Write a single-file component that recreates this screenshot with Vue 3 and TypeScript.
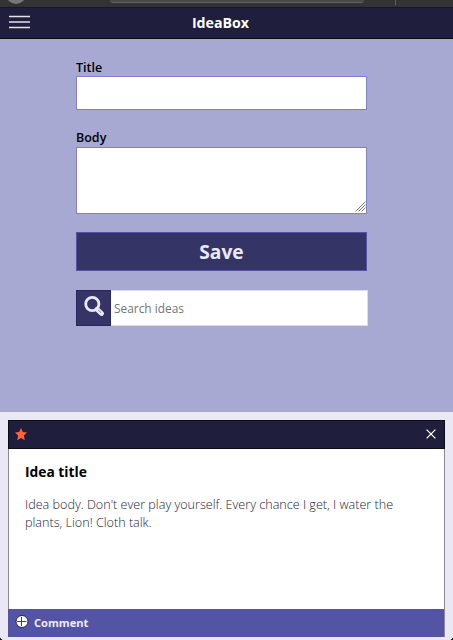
<script setup lang="ts">
import { ref } from 'vue'

interface Idea {
  title: string
  body: string
}

const title = ref('')
const body = ref('')
const query = ref('')
const ideas = ref<Idea[]>([
  {
    title: 'Idea title',
    body: "Idea body. Don't ever play yourself. Every chance I get, I water the plants, Lion! Cloth talk.",
  },
])

function save(): void {
  if (!title.value || !body.value) return
  ideas.value.unshift({ title: title.value, body: body.value })
  title.value = ''
  body.value = ''
}
</script>

<template>
  <div class="page">
    <div class="chrome">
      <span class="knob"></span>
      <span class="address"></span>
      <span class="divider"></span>
    </div>
    <header class="topbar">
      <button class="menu" type="button">
        <svg width="21" height="14" viewBox="0 0 21 14">
          <path d="M0 1.5h21M0 7h21M0 12.5h21" stroke="#e2e2e8" stroke-width="1.3" />
        </svg>
      </button>
      <h1>IdeaBox</h1>
    </header>
    <form class="composer" @submit.prevent="save">
      <label for="title">Title</label>
      <input id="title" v-model="title" class="title-input" type="text" />
      <label for="body" class="body-label">Body</label>
      <div class="area">
        <textarea id="body" v-model="body"></textarea>
        <svg class="grip" width="11" height="11" viewBox="0 0 11 11">
          <path d="M0.5 10.5L10.5 0.5M3.5 10.5L10.5 3.5M6.5 10.5L10.5 6.5" stroke="#777" stroke-width="1" />
        </svg>
      </div>
      <button class="save" type="submit">Save</button>
      <div class="search">
        <span class="search-icon">
          <svg width="20" height="21" viewBox="0 0 20 21">
            <path d="M13 13.2l4.5 4.3" stroke="#e9e8f5" stroke-width="4.8" stroke-linecap="round" />
            <circle cx="8.3" cy="8" r="6.6" fill="none" stroke="#e9e8f5" stroke-width="2.8" />
            <path d="M14.2 14l2.8 2.7" stroke="#777695" stroke-width="0.9" />
          </svg>
        </span>
        <input v-model="query" type="text" placeholder="Search ideas" />
      </div>
    </form>
    <main class="ideas">
      <article v-for="idea in ideas" :key="idea.title" class="card">
        <div class="card-top">
          <svg width="12" height="13" viewBox="0 0 12 13">
            <path d="M6 0l1.8 4 4.2.4-3.1 3 .9 4.9L6 9.9l-3.8 2.4.9-4.9L0 4.4 4.2 4z" fill="#ff6339" />
          </svg>
          <svg width="10" height="10" viewBox="0 0 10 10">
            <path d="M.6.6l8.8 8.8M9.4.6L.6 9.4" stroke="#fff" stroke-width="1.3" />
          </svg>
        </div>
        <div class="card-body">
          <h2>{{ idea.title }}</h2>
          <p>{{ idea.body }}</p>
        </div>
        <footer class="card-foot">
          <svg width="14" height="14" viewBox="0 0 14 14">
            <circle cx="7" cy="6.5" r="6" fill="#fff" stroke="#1f1e60" stroke-width="1" />
            <path d="M6.5 2v9M2 6.5h9.5" stroke="#3d3d5c" stroke-width="1" />
          </svg>
          <span>Comment</span>
        </footer>
      </article>
    </main>
    <span class="corner left"></span>
    <span class="corner right"></span>
  </div>
</template>

<style>
body {
  margin: 0;
}
</style>

<style scoped>
.page,
.page * {
  box-sizing: border-box;
}
.page {
  position: relative;
  display: flex;
  flex-direction: column;
  height: 640px;
  overflow: hidden;
  background: #e9e8f4;
  font-family: 'Open Sans', sans-serif;
  color: #000;
}
.chrome {
  display: flex;
  height: 7px;
  flex: none;
  overflow: hidden;
  background: #333335;
}
.knob {
  width: 20px;
  height: 20px;
  flex: none;
  margin: -16px 0 0 6px;
  border-radius: 50%;
  background: #777779;
}
.address {
  width: 254px;
  height: 12px;
  flex: none;
  margin: -9px 0 0 84px;
  border-bottom: 1px solid #626264;
  border-radius: 3px;
  background: #49494b;
}
.divider {
  width: 1px;
  height: 5px;
  margin-left: 31px;
  background: #606062;
}
.topbar {
  display: grid;
  grid-template-columns: 30px 1fr 51px;
  align-items: center;
  height: 32px;
  flex: none;
  padding-left: 9px;
  border-top: 1px solid #17171f;
  border-bottom: 1px solid #08080f;
  background: #1f1e3d;
}
.menu {
  display: flex;
  margin-top: -2px;
  padding: 0;
  border: 0;
  background: none;
}
h1 {
  margin: -1px 0 0;
  text-align: center;
  font-size: 14.2px;
  font-weight: 700;
  line-height: 20px;
  color: #fff;
}
.composer {
  display: flex;
  flex-direction: column;
  height: 373px;
  flex: none;
  padding: 20px 86px 0 76px;
  background: #a8a9d3;
}
label {
  height: 17px;
  font-size: 12.5px;
  font-weight: 600;
  line-height: 18px;
}
.title-input,
textarea {
  display: block;
  width: 291px;
  margin: 0;
  padding: 4px;
  border: 1px solid #8280c0;
  border-radius: 0;
  background: #fff;
  font: 12px 'Open Sans', sans-serif;
  outline: 0;
}
.title-input {
  height: 34px;
}
.body-label {
  height: 18px;
  margin-top: 19px;
}
.area {
  position: relative;
  height: 67px;
}
textarea {
  height: 67px;
  resize: none;
}
.grip {
  position: absolute;
  right: 1px;
  bottom: 2px;
}
.save {
  height: 39px;
  flex: none;
  margin-top: 18px;
  padding: 0;
  border: 1px solid #5453a5;
  background: #353466;
  color: #e9e8f5;
  font: 700 19.2px 'Open Sans', sans-serif;
}
.search {
  display: flex;
  height: 36px;
  flex: none;
  margin: 19px -1px 0 0;
}
.search-icon {
  display: flex;
  width: 35px;
  flex: none;
  padding: 5px 0 0 7px;
  border: 1px solid #29285c;
  background: #353466;
}
.search input {
  min-width: 0;
  flex: 1;
  padding: 0 3px;
  border: 1px solid #dcdce4;
  border-left: 0;
  border-radius: 0;
  background: #fff;
  font: 11.9px 'Open Sans', sans-serif;
  outline: 0;
}
.search input::placeholder {
  color: #757575;
}
.ideas {
  padding: 8px 8px 0;
}
.card {
  display: flex;
  flex-direction: column;
  height: 217px;
  border-right: 1px solid #8b8b91;
  border-left: 1px solid #8b8b91;
  background: #fff;
}
.card-top {
  display: flex;
  align-items: center;
  justify-content: space-between;
  height: 29px;
  flex: none;
  margin: 0 -1px;
  padding: 0 8px 1px 6px;
  border: 1px solid #0c0c14;
  background: #1f1e3d;
}
.card-body {
  flex: 1;
  padding: 13px 40px 0 16px;
}
h2 {
  margin: 0;
  font-size: 13.8px;
  font-weight: 700;
  line-height: 20px;
}
p {
  margin: 14px 0 0;
  font-size: 12.6px;
  font-weight: 300;
  line-height: 18px;
  color: #242338;
}
.card-foot {
  display: flex;
  align-items: center;
  gap: 5px;
  height: 28px;
  flex: none;
  margin: 0 0 0 -1px;
  padding: 0 0 3px 7px;
  background: #5355a4;
  color: #eeedfa;
  font-size: 11.1px;
  font-weight: 700;
}
.card-foot span {
  padding-top: 2px;
}
.corner {
  position: absolute;
  bottom: 0;
  width: 3px;
  height: 3px;
}
.left {
  left: 0;
  background: radial-gradient(circle at 100% 0, transparent 2.5px, #111 3px);
}
.right {
  right: 0;
  background: radial-gradient(circle at 0 0, transparent 2.5px, #111 3px);
}
</style>
